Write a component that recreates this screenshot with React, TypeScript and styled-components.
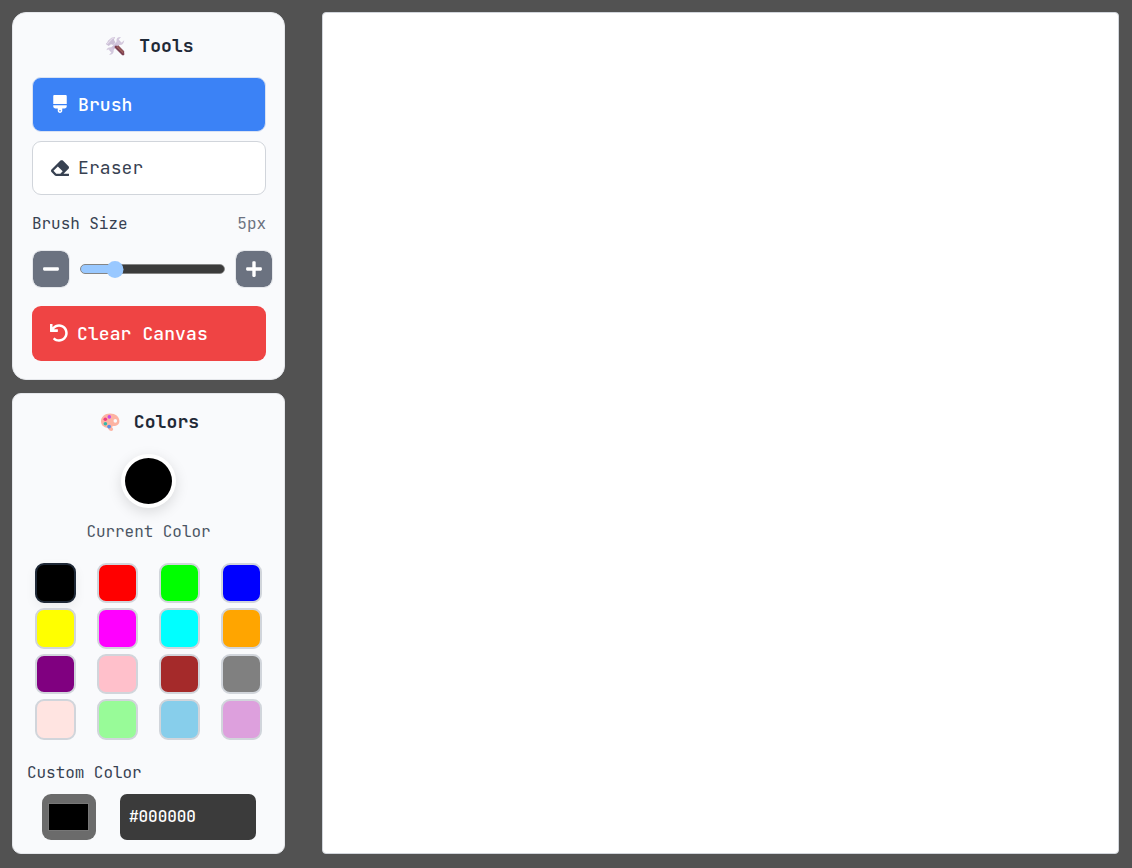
import React, { useState } from "react";
import styled, { createGlobalStyle } from "styled-components";
import { FaBrush, FaEraser, FaMinus, FaPlus, FaUndo } from "react-icons/fa";

const GlobalStyle = createGlobalStyle`
  *, *::before, *::after { box-sizing: border-box; }
  body {
    margin: 0;
    background: #525252;
    overflow: hidden;
  }
  body, button, input {
    font-family: "JetBrains Mono", "DejaVu Sans Mono", "Liberation Mono", monospace;
  }
`;

const Page = styled.div`
  display: flex;
  gap: 37px;
  height: 868px;
  padding: 12px 13px 14px 12px;
`;

const Sidebar = styled.aside`
  display: flex;
  flex-direction: column;
  gap: 13px;
  width: 273px;
  flex: none;
`;

const ToolsPanel = styled.section`
  display: flex;
  flex-direction: column;
  height: 368px;
  padding: 20px 18px 18px 19px;
  border: 1px solid #e5e7eb;
  border-radius: 14px;
  background: #f9fafc;
`;

const ColorsPanel = styled.section`
  display: flex;
  flex-direction: column;
  height: 461px;
  padding: 15px 14px 13px;
  border: 1px solid #e5e7eb;
  border-radius: 9px;
  background: #f9fafc;
`;

const Title = styled.h3<{ $shift?: number }>`
  display: flex;
  align-items: center;
  justify-content: center;
  gap: 14px;
  height: 26px;
  margin: 0;
  padding-left: ${(p) => p.$shift ?? 0}px;
  color: #1f2937;
  font-size: 18px;
  line-height: 26px;
  letter-spacing: 0.1px;

  svg { flex: none; }
`;

const ToolButton = styled.button<{ $active?: boolean }>`
  display: flex;
  align-items: center;
  gap: 9px;
  width: 234px;
  height: 54px;
  padding: 0 17px 1px 18px;
  border: 1px solid ${(p) => (p.$active ? "#d9e2f3" : "#d1d5db")};
  border-radius: 9px;
  background: ${(p) => (p.$active ? "#3b82f6" : "#ffffff")};
  color: ${(p) => (p.$active ? "#ffffff" : "#374151")};
  font-size: 18px;
  font-weight: ${(p) => (p.$active ? 500 : 400)};
  letter-spacing: 0.1px;

  &:first-child { height: 55px; }

  svg { flex: none; }
`;

const ToolList = styled.div`
  display: flex;
  flex-direction: column;
  gap: 9px;
  margin-top: 18px;
`;

const SizeHeader = styled.div`
  display: flex;
  justify-content: space-between;
  width: 234px;
  margin-top: 17px;
  color: #374151;
  font-size: 16px;
  line-height: 24px;
  letter-spacing: -0.05px;
`;

const SizeValue = styled.span`
  color: #6b7280;
`;

const SizeControls = styled.div`
  display: flex;
  align-items: center;
  gap: 10px;
  width: 241px;
  height: 38px;
  margin-top: 14px;
`;

const StepButton = styled.button`
  display: flex;
  align-items: center;
  justify-content: center;
  flex: none;
  width: 38px;
  height: 38px;
  padding: 0;
  border: 1px solid #e5e7eb;
  border-radius: 9px;
  background: #6b7280;
  background-clip: padding-box;
  color: #ffffff;
`;

const Slider = styled.input<{ $percent: number }>`
  appearance: none;
  flex: 1;
  min-width: 0;
  height: 18px;
  margin: 0;
  background: transparent;

  &::-webkit-slider-runnable-track {
    height: 10px;
    border: 1px solid #858585;
    border-radius: 5px;
    background: linear-gradient(to right, #99c8ff ${(p) => p.$percent}%, #3b3b3b ${(p) => p.$percent}%);
  }

  &::-webkit-slider-thumb {
    appearance: none;
    width: 17px;
    height: 17px;
    margin-top: -4.5px;
    border-radius: 50%;
    background: #99c8ff;
    transform: translateX(-1.5px);
  }
`;

const ClearButton = styled.button`
  display: flex;
  align-items: center;
  gap: 9px;
  width: 234px;
  height: 55px;
  margin-top: 18px;
  padding: 0 18px;
  border: 0;
  border-radius: 9px;
  background: #ef4444;
  color: #ffffff;
  font-size: 18px;
  font-weight: 500;
  letter-spacing: 0.1px;

  svg { margin-top: -1px; }
`;

const CurrentColor = styled.div`
  display: flex;
  flex-direction: column;
  align-items: center;
  gap: 12px;
  margin-top: 19px;
  color: #4b5563;
  font-size: 16px;
  line-height: 24px;
  letter-spacing: -0.05px;
`;

const Preview = styled.div<{ $color: string }>`
  width: 55px;
  height: 54px;
  border: 4px solid #ffffff;
  border-radius: 50%;
  background: ${(p) => p.$color};
  box-shadow: 0 4px 14px rgba(0, 0, 0, 0.13);
`;

const Palette = styled.div`
  display: grid;
  grid-template-columns: repeat(4, 41px);
  gap: 4.75px 21px;
  margin: 18.7px 0 0 8px;
`;

const Swatch = styled.button<{ $color: string; $selected: boolean }>`
  width: 41px;
  height: 40.7px;
  padding: 0;
  border: 2px solid ${(p) => (p.$selected ? "#1f2937" : "#d1d5db")};
  border-radius: 9px;
  background: ${(p) => p.$color};
  box-shadow: ${(p) => (p.$selected ? "0 4px 12px rgba(0, 0, 0, 0.06)" : "none")};
`;

const CustomLabel = styled.label`
  margin-top: 21.2px;
  color: #374151;
  font-size: 16px;
  line-height: 24px;
  letter-spacing: -0.05px;
`;

const CustomRow = styled.div`
  display: flex;
  gap: 24px;
  margin: 9px 0 0 15px;
`;

const ColorPicker = styled.div`
  width: 54px;
  height: 46px;
  padding: 9px 7px 9px 6px;
  border-radius: 9px;
  background: #6b6b6b;
`;

const ColorChip = styled.div<{ $color: string }>`
  height: 28px;
  border: 1px solid #777777;
  background: ${(p) => p.$color};
`;

const HexInput = styled.input`
  width: 136px;
  height: 46px;
  padding: 0 9px;
  border: 0;
  border-radius: 7px;
  outline: 0;
  background: #3b3b3b;
  color: #ffffff;
  font-size: 16px;
  font-weight: 500;
  letter-spacing: -0.05px;
`;

const Canvas = styled.main`
  flex: 1;
  border: 1px solid #d1d5db;
  border-radius: 4px;
  background: #ffffff;
`;

const ToolsIcon = () => (
  <svg width="20" height="20" viewBox="0 0 20 20" fill="none">
    <path d="M9 9.5L11.5 7.5L19.2 15.2Q19.9 17.4 17.6 18.9Z" fill="#7d4053" />
    <path d="M11 9L18.3 16.2" stroke="#a6695e" strokeWidth="1.2" />
    <path d="M.8 8L2.4 6.2L3 4.8L6.5 1.7L10.2 1L8.9 3.8L10.5 6.5L8.3 9L6 8.2L3.6 9.9Z" fill="#cbbfd6" />
    <path d="M2.2 7.8L6.7 3L9 1.8" stroke="#e4dbea" strokeWidth="1.2" />
    <path d="M5 15L15 5" stroke="#cdbfd9" strokeWidth="3.2" />
    <path d="M16 1Q11 .8 11.5 5.2L11.5 7L13.2 8.8Q18.8 10 19.2 4.2L16.7 6.4L14.1 5.8L13.8 3.5Z" fill="#d3c8dd" />
    <path d="M1.4 14.3Q2.3 10.8 6.4 11.2L8.7 13.5Q9.3 18.8 4 18.9L6.3 16.4L5.5 14L3.3 13.4Z" fill="#d3c8dd" />
    <path d="M11 11L18 18" stroke="#7d4053" strokeWidth="2.8" strokeLinecap="round" />
    <path d="M11.8 10.7L18.3 17.1" stroke="#a6695e" strokeWidth="1" />
  </svg>
);

const PaletteIcon = () => (
  <svg width="20" height="20" viewBox="0 0 20 20">
    <path
      fillRule="evenodd"
      d="M10 1.4C4.8 1.4 1 4.9 1 9.2c0 3.7 2.4 5.8 6 6.5 1.8.4 1.4 3.2 4.4 3.2 2.1 0 2.2-1.8 1-3.1-.7-.9-.2-1.8 1.2-1.8 3.5 0 5.8-1.8 5.8-5C19.4 4.4 15.4 1.4 10 1.4Zm5.3 5.7a1.8 1.8 0 1 1 0 3.6 1.8 1.8 0 0 1 0-3.6Z"
      fill="#fdb3a2"
    />
    <circle cx="9.3" cy="4.9" r="1.8" fill="#c54be6" />
    <circle cx="5.3" cy="7.2" r="1.8" fill="#ef3c80" />
    <circle cx="5.4" cy="11.8" r="1.8" fill="#36b7a9" />
    <circle cx="9.1" cy="14.6" r="1.9" fill="#5a91e5" />
  </svg>
);

const COLORS = [
  "#000000", "#ff0000", "#00ff00", "#0000ff",
  "#ffff00", "#ff00ff", "#00ffff", "#ffa500",
  "#800080", "#ffc0cb", "#a52a2a", "#808080",
  "#ffe4e1", "#98fb98", "#87ceeb", "#dda0dd",
];

export default function App() {
  const [tool, setTool] = useState<"brush" | "eraser">("brush");
  const [size, setSize] = useState(5);
  const [color, setColor] = useState("#000000");

  return (
    <>
      <GlobalStyle />
      <Page>
        <Sidebar>
          <ToolsPanel>
            <Title $shift={1}><ToolsIcon />Tools</Title>
            <ToolList>
              <ToolButton $active={tool === "brush"} onClick={() => setTool("brush")}>
                <FaBrush size={18} />Brush
              </ToolButton>
              <ToolButton $active={tool === "eraser"} onClick={() => setTool("eraser")}>
                <FaEraser size={18} />Eraser
              </ToolButton>
            </ToolList>
            <SizeHeader>
              <span>Brush Size</span>
              <SizeValue>{size}px</SizeValue>
            </SizeHeader>
            <SizeControls>
              <StepButton aria-label="Decrease size" onClick={() => setSize(Math.max(1, size - 1))}>
                <FaMinus size={18} />
              </StepButton>
              <Slider
                type="range"
                min={1}
                max={20}
                value={size}
                $percent={((size - 1) / 19) * 88 + 6}
                onChange={(e) => setSize(Number(e.target.value))}
              />
              <StepButton aria-label="Increase size" onClick={() => setSize(Math.min(20, size + 1))}>
                <FaPlus size={18} />
              </StepButton>
            </SizeControls>
            <ClearButton><FaUndo size={18} />Clear Canvas</ClearButton>
          </ToolsPanel>
          <ColorsPanel>
            <Title $shift={2}><PaletteIcon />Colors</Title>
            <CurrentColor>
              <Preview $color={color} />
              <span>Current Color</span>
            </CurrentColor>
            <Palette>
              {COLORS.map((c) => (
                <Swatch key={c} aria-label={c} $color={c} $selected={c === color} onClick={() => setColor(c)} />
              ))}
            </Palette>
            <CustomLabel>Custom Color</CustomLabel>
            <CustomRow>
              <ColorPicker><ColorChip $color={color} /></ColorPicker>
              <HexInput value={color} onChange={(e) => setColor(e.target.value)} />
            </CustomRow>
          </ColorsPanel>
        </Sidebar>
        <Canvas />
      </Page>
    </>
  );
}
